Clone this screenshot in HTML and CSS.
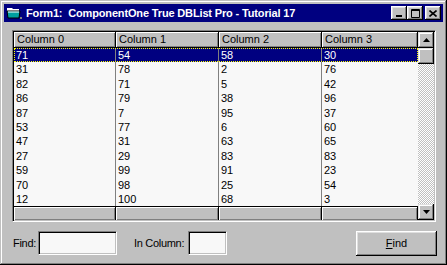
FILE: index.html
```html
<!DOCTYPE html>
<html>
<head>
<title>Form1</title>
<link rel="stylesheet" href="styles.css">
</head>
<body>
<div class="window">
  <div class="titlebar">
    <svg class="appicon" width="16" height="16" viewBox="0 0 16 16">
      <path d="M1 3h5l1 1h6v2H1z" fill="#fff"/>
      <path d="M1 6h13l-1 7H2z" fill="#00a0a0" stroke="#000" stroke-width="1"/>
      <path d="M2 7h11" stroke="#fff"/>
      <path d="M14 12h2v2h-2z" fill="#808080"/>
    </svg>
    <span class="title">Form1:&nbsp; ComponentOne True DBList Pro - Tutorial 17</span>
    <div class="capbtns">
      <span class="capbtn"><svg width="8" height="7" viewBox="0 0 8 7"><path d="M1 5h6v2H1z" fill="#000"/></svg></span>
      <span class="capbtn"><svg width="9" height="9" viewBox="0 0 9 9"><path d="M0.5 0.5h8v8h-8z M0.5 1.5h8" fill="none" stroke="#000"/></svg></span>
      <span class="capbtn close"><svg width="8" height="7" viewBox="0 0 8 7"><path d="M0.5 0.5l7 6M7.5 0.5l-7 6" stroke="#000" stroke-width="1.6"/></svg></span>
    </div>
  </div>

  <div class="client">
    <div class="grid">
      <div class="cols">
        <div class="row header">
          <div class="cell c0">Column 0</div>
          <div class="cell c1">Column 1</div>
          <div class="cell c2">Column 2</div>
          <div class="cell c3">Column 3</div>
        </div>
        <div class="rows">
          <div class="row selected"><div class="cell c0">71</div><div class="cell c1">54</div><div class="cell c2">58</div><div class="cell c3">30</div></div>
          <div class="row"><div class="cell c0">31</div><div class="cell c1">78</div><div class="cell c2">2</div><div class="cell c3">76</div></div>
          <div class="row"><div class="cell c0">82</div><div class="cell c1">71</div><div class="cell c2">5</div><div class="cell c3">42</div></div>
          <div class="row"><div class="cell c0">86</div><div class="cell c1">79</div><div class="cell c2">38</div><div class="cell c3">96</div></div>
          <div class="row"><div class="cell c0">87</div><div class="cell c1">7</div><div class="cell c2">95</div><div class="cell c3">37</div></div>
          <div class="row"><div class="cell c0">53</div><div class="cell c1">77</div><div class="cell c2">6</div><div class="cell c3">60</div></div>
          <div class="row"><div class="cell c0">47</div><div class="cell c1">31</div><div class="cell c2">63</div><div class="cell c3">65</div></div>
          <div class="row"><div class="cell c0">27</div><div class="cell c1">29</div><div class="cell c2">83</div><div class="cell c3">83</div></div>
          <div class="row"><div class="cell c0">59</div><div class="cell c1">99</div><div class="cell c2">91</div><div class="cell c3">23</div></div>
          <div class="row"><div class="cell c0">70</div><div class="cell c1">98</div><div class="cell c2">25</div><div class="cell c3">54</div></div>
          <div class="row"><div class="cell c0">12</div><div class="cell c1">100</div><div class="cell c2">68</div><div class="cell c3">3</div></div>
        </div>
        <div class="row footer">
          <div class="cell c0"></div>
          <div class="cell c1"></div>
          <div class="cell c2"></div>
          <div class="cell c3"></div>
        </div>
      </div>
      <div class="vscroll">
        <div class="sbtn"><svg width="7" height="4" viewBox="0 0 7 4"><path d="M3.5 0L7 4H0z" fill="#000"/></svg></div>
        <div class="thumb"></div>
        <div class="track"></div>
        <div class="sbtn"><svg width="7" height="4" viewBox="0 0 7 4"><path d="M0 0h7L3.5 4z" fill="#000"/></svg></div>
      </div>
    </div>

    <div class="findbar">
      <span class="label">Find:</span>
      <span class="textbox find"></span>
      <span class="label incol">In Column:</span>
      <span class="textbox colbox"></span>
      <span class="button"><u>F</u>ind</span>
    </div>
  </div>
</div>
</body>
</html>
```

FILE: styles.css
```css
body {
    margin: 0;
    font-family: "Liberation Sans", Arial, sans-serif;
    font-size: 11px;
    background: #c0c0c0;
}

.window {
    width: 447px;
    height: 265px;
    box-sizing: border-box;
    background: #c0c0c0;
    padding: 4px;
    box-shadow: inset -1px -1px #000, inset 1px 1px #c0c0c0,
                inset -2px -2px #808080, inset 2px 2px #fff;
}

.titlebar {
    height: 18px;
    background: #000080;
    display: flex;
    align-items: center;
    padding-left: 2px;
}

.appicon {
    margin-right: 4px;
}

.title {
    color: #fff;
    font-weight: bold;
    font-size: 11px;
    letter-spacing: -0.15px;
    flex: 1;
    white-space: nowrap;
}

.capbtns {
    display: flex;
    padding-right: 2px;
}

.capbtn {
    width: 16px;
    height: 14px;
    box-sizing: border-box;
    background: #c0c0c0;
    display: flex;
    align-items: center;
    justify-content: center;
    box-shadow: inset -1px -1px #000, inset 1px 1px #fff,
                inset -2px -2px #808080, inset 2px 2px #dfdfdf;
}

.capbtn.close {
    margin-left: 2px;
}

.client {
    padding: 8px 0 0 8px;
}

.grid {
    width: 424px;
    height: 192px;
    box-sizing: border-box;
    display: flex;
    border: 1px solid;
    border-color: #808080 #fff #fff #808080;
    box-shadow: inset 1px 1px #000, inset -1px -1px #c0c0c0;
    padding: 1px;
    background: #f8f8f8;
}

.cols {
    width: 404px;
    display: flex;
    flex-direction: column;
}

.row {
    display: flex;
    height: 14.4px;
    line-height: 14px;
}

.cell {
    box-sizing: border-box;
    border-right: 1px solid #808080;
    padding-left: 2px;
    overflow: hidden;
    white-space: nowrap;
}

.c0 { width: 102px; }
.c1 { width: 103px; }
.c2 { width: 103px; }
.c3 { width: 96px; border-right: none; }

.row.header {
    height: 16px;
    line-height: 15px;
}

.header .cell,
.footer .cell {
    background: #c0c0c0;
    border-right: 1px solid #000;
    box-shadow: inset 1px 1px #fff, inset -1px -1px #808080;
    padding-left: 3px;
}

.header .c3,
.footer .c3 {
    border-right: 1px solid #000;
}

.header {
    border-bottom: 1px solid #000;
}

.rows {
    flex: 1;
}

.row.selected {
    background: #000080;
    color: #fff;
    outline: 1px dotted #ffff00;
    outline-offset: -1px;
}

.row.footer {
    height: 14px;
    border-top: 1px solid #000;
}

.vscroll {
    width: 16px;
    display: flex;
    flex-direction: column;
}

.sbtn,
.thumb {
    height: 16px;
    box-sizing: border-box;
    background: #c0c0c0;
    display: flex;
    align-items: center;
    justify-content: center;
    box-shadow: inset -1px -1px #000, inset 1px 1px #dfdfdf,
                inset -2px -2px #808080, inset 2px 2px #fff;
}

.track {
    flex: 1;
    background: repeating-conic-gradient(#c0c0c0 0 25%, #fff 0 50%) 0 0 / 2px 2px;
}

.findbar {
    display: flex;
    align-items: center;
    margin-top: 9px;
    height: 24px;
}

.label {
    margin-left: 1px;
    margin-right: 2px;
    letter-spacing: -0.3px;
}

.textbox {
    height: 24px;
    box-sizing: border-box;
    background: #f8f8f8;
    border: 1px solid;
    border-color: #808080 #fff #fff #808080;
    box-shadow: inset 1px 1px #000, inset -1px -1px #c0c0c0;
}

.find {
    width: 79px;
}

.incol {
    margin-left: 17px;
    margin-right: 4px;
}

.colbox {
    width: 39px;
}

.button {
    margin-left: auto;
    margin-right: 6px;
    width: 81px;
    height: 25px;
    box-sizing: border-box;
    display: flex;
    align-items: center;
    justify-content: center;
    box-shadow: inset -1px -1px #000, inset 1px 1px #fff,
                inset -2px -2px #808080, inset 2px 2px #dfdfdf;
}

.button u {
    text-decoration: underline;
}
```
